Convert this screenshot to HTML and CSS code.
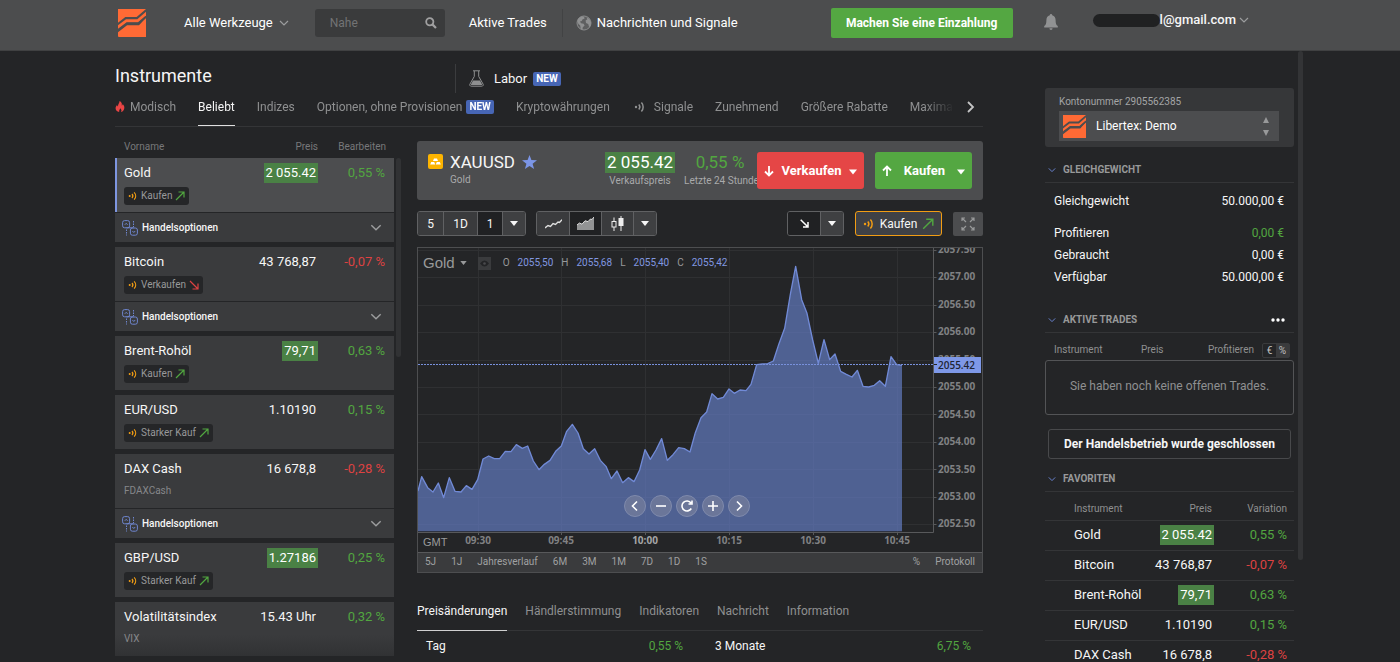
FILE: index.html
```html
<!DOCTYPE html>
<html lang="de">
<head>
<meta charset="utf-8">
<meta name="viewport" content="width=device-width, initial-scale=1">
<title>Libertex: Demo</title>
<link rel="stylesheet" href="styles.css">
</head>
<body>
<svg class="sprite" aria-hidden="true">
  <symbol id="logo" viewBox="0 0 84 84"><path fill="#ff6a35" d="M0 0H84L56 24H22L0 41Z"/><path fill="#ff6a35" d="M0 61V49L24 31H58L84 8V20L61 41H26Z"/><path fill="#ff6a35" d="M84 26V84H2L0 82V70L27 49H63Z"/><path d="M2 62L27 43H61L84 23" fill="none" stroke="#4c4d4e" stroke-width="6"/></symbol>
  <symbol id="chev" viewBox="0 0 10 6"><path d="M1 1l4 4 4-4" fill="none" stroke="currentColor" stroke-width="1.2"/></symbol>
  <symbol id="signal" viewBox="0 0 12 12"><circle cx="2" cy="6" r="1.2" fill="currentColor"/><path d="M4.8 3.6a3.6 3.6 0 0 1 0 4.8M7.4 1.6a6.4 6.4 0 0 1 0 8.8" fill="none" stroke="currentColor" stroke-width="1.5"/></symbol>
  <symbol id="up" viewBox="0 0 10 10"><path d="M1 9L9 1M3.5 1H9V6.5" fill="none" stroke="currentColor" stroke-width="1.2"/></symbol>
  <symbol id="down" viewBox="0 0 10 10"><path d="M1 1L9 9M3.5 9H9V3.5" fill="none" stroke="currentColor" stroke-width="1.2"/></symbol>
  <symbol id="tri" viewBox="0 0 8 5"><path d="M0 0h8L4 5z" fill="currentColor"/></symbol>
  <symbol id="opts" viewBox="0 0 16 16"><g fill="none" stroke="#6f86cf"><rect x=".6" y=".6" width="7" height="7.2" rx="2"/><rect x="8.4" y="8" width="7" height="7.2" rx="2"/><path d="M2.8 4.8l1.4-1.5 1.4 1.5M10.4 11l1.4 1.5 1.4-1.5M4.500 7.800h7"/><path d="M11.5 1v6M4.5 9.5v6" stroke-dasharray="1.5 1"/></g></symbol>
</svg>

<header class="topbar">
  <a class="brand" href="#" aria-label="Libertex"><svg width="28" height="28"><use href="#logo"/></svg></a>
  <button class="nav all-tools">Alle Werkzeuge <svg class="grey" width="10" height="6"><use href="#chev"/></svg></button>
  <label class="search">
    <input type="text" placeholder="Nahe" aria-label="Nahe">
    <svg width="12" height="12" viewBox="0 0 12 12"><circle cx="4.8" cy="4.8" r="3.6" fill="none" stroke="#a0a0a1" stroke-width="1.8"/><path d="M7.4 7.4L11 11" stroke="#a0a0a1" stroke-width="2.2"/></svg>
  </label>
  <a class="nav" href="#">Aktive Trades</a>
  <a class="nav news" href="#">
    <svg width="16" height="16" viewBox="0 0 16 16"><circle cx="8" cy="8" r="7" fill="#5e5f60" stroke="#8b8c8d"/><path fill="#8f9091" d="M2 4l3-2.4 3 .2.6 1.6-2.2 1L5.8 6 4 6.6l1 1.6 2.6.6 1 1.8-1.8 1.6L6.4 15l-1.6-.8-.6-3.6L2.4 9 1.4 6.2zM10.4 2.2l3 1.8 1.6 3.6-.4 3.2-1.4 1.4-1-3.2-2.2-1-.4-2.4 1.8-1.4z"/></svg>
    Nachrichten und Signale</a>
  <button class="deposit">Machen Sie eine Einzahlung</button>
  <button class="bell" aria-label="Mitteilungen"><svg width="14" height="17" viewBox="0 0 14 17"><path fill="#919293" d="M7 0c.8 0 1.2.6 1.2 1.3 2.4.6 3.4 2.5 3.4 4.8 0 3.5.6 5 2.2 6v1.3H.2v-1.3c1.6-1 2.2-2.5 2.2-6 0-2.3 1-4.2 3.4-4.800C5.800.6 6.200 0 7 0zM5.400 14.300h3.200a1.600 1.600 0 0 1-3.200 0z"/></svg></button>
  <button class="account"><span class="redacted"></span><span>l@gmail.com</span><svg class="grey" width="10" height="6"><use href="#chev"/></svg></button>
</header>

<div class="page">
<main>
  <div class="title-row">
    <h1>Instrumente</h1>
    <a class="labor" href="#">
      <svg width="15" height="17" viewBox="0 0 15 17"><path d="M4 .8h7M5.300 1v5.400L1 14a1.400 1.400 0 0 0 1.200 2.200h10.600A1.400 1.400 0 0 0 14 14L9.700 6.400V1" fill="none" stroke="#8e8f90"/><path d="M4 10.500h7l2 3.700c.2.600 0 .9-.5.9h-10c-.500 0-.7-.3-.5-.9z" fill="#8e8f90"/></svg>
      Labor <span class="new">NEW</span></a>
  </div>
  <nav class="tabs">
    <div class="tabs-clip">
    <a class="hot" href="#"><svg width="10" height="11" viewBox="0 0 10 11"><path fill="#e94545" d="M4.600 0C7.200 1.400 7 3.400 6.700 4.600c.7-.2 1-.9 1-1.600C9.200 4.600 9.600 6 9.200 7.800 8.800 9.600 7.400 10.900 6 11c.8-1.200.6-2.600-.8-3.800-.2 1.200-1.400 2-1 3.800C2 10.800.7 9.400.6 7.600.5 6 1.400 5 2 4c.2.700.4 1 .9 1.400C2.900 3.200 4.400 2.400 4.600 0z"/></svg>Modisch</a>
    <a class="active" href="#">Beliebt</a>
    <a href="#">Indizes</a>
    <a href="#">Optionen, ohne Provisionen <span class="new">NEW</span></a>
    <a href="#">Kryptowährungen</a>
    <a class="sig" href="#"><svg width="12" height="12"><use href="#signal"/></svg>Signale</a>
    <a href="#">Zunehmend</a>
    <a href="#">Größere Rabatte</a>
    <a href="#">Maximale</a>
    </div>
    <button aria-label="Weiter"><svg width="8" height="12" viewBox="0 0 8 12"><path d="M1 1l5 5-5 5" fill="none" stroke="#c4c4c5" stroke-width="1.800"/></svg></button>
  </nav>

  <div class="columns">
    <section class="list">
      <div class="list-head"><span>Vorname</span><span>Preis</span><span>Bearbeiten</span></div>
      <div class="list-wrap">
      <div class="items">
        <article class="item selected"><div class="quote"><b>Gold</b><span><mark>2 055.42</mark></span><i class="pos">0,55 %</i></div><span class="tag"><svg width="10" height="10"><use href="#signal"/></svg>Kaufen<svg class="pos" width="10" height="10"><use href="#up"/></svg></span></article>
        <button class="options"><svg width="16" height="16"><use href="#opts"/></svg>Handelsoptionen<svg class="grey" width="12" height="7"><use href="#chev"/></svg></button>
        <article class="item"><div class="quote"><b>Bitcoin</b><span>43 768,87</span><i class="neg">-0,07 %</i></div><span class="tag"><svg width="10" height="10"><use href="#signal"/></svg>Verkaufen<svg class="neg" width="10" height="10"><use href="#down"/></svg></span></article>
        <button class="options"><svg width="16" height="16"><use href="#opts"/></svg>Handelsoptionen<svg class="grey" width="12" height="7"><use href="#chev"/></svg></button>
        <article class="item"><div class="quote"><b>Brent-Rohöl</b><span><mark>79,71</mark></span><i class="pos">0,63 %</i></div><span class="tag"><svg width="10" height="10"><use href="#signal"/></svg>Kaufen<svg class="pos" width="10" height="10"><use href="#up"/></svg></span></article>
        <article class="item"><div class="quote"><b>EUR/USD</b><span>1.10190</span><i class="pos">0,15 %</i></div><span class="tag"><svg width="10" height="10"><use href="#signal"/></svg>Starker Kauf<svg class="pos" width="10" height="10"><use href="#up"/></svg></span></article>
        <article class="item"><div class="quote"><b>DAX Cash</b><span>16 678,8</span><i class="neg">-0,28 %</i></div><span class="code">FDAXCash</span></article>
        <button class="options"><svg width="16" height="16"><use href="#opts"/></svg>Handelsoptionen<svg class="grey" width="12" height="7"><use href="#chev"/></svg></button>
        <article class="item"><div class="quote"><b>GBP/USD</b><span><mark>1.27186</mark></span><i class="pos">0,25 %</i></div><span class="tag"><svg width="10" height="10"><use href="#signal"/></svg>Starker Kauf<svg class="pos" width="10" height="10"><use href="#up"/></svg></span></article>
        <article class="item last"><div class="quote"><b>Volatilitätsindex</b><span>15.43 Uhr</span><i class="pos">0,32 %</i></div><span class="code">VIX</span></article>
      </div>
      <div class="thumb"></div>
      </div>
    </section>

    <section class="detail">
      <div class="hero">
        <svg width="15" height="15" viewBox="0 0 15 15"><rect width="15" height="15" rx="2" fill="#fdb400"/><path fill="#fff" d="M6 4.500h3l1 2.500H5zM3.200 8h3l1 2.500h-5zM8.800 8h3l1 2.500h-5z"/></svg>
        <div class="sym"><h2>XAUUSD</h2><small>Gold</small></div>
        <svg class="star" width="15" height="15" viewBox="0 0 15 15"><path fill="#7b95e6" d="M7.500 0l1.900 5.100 5.600.2-4.400 3.400 1.500 5.300-4.600-3.100L2.900 14l1.500-5.300L0 5.300l5.600-.2z"/></svg>
        <div class="stat price"><mark>2 055.42</mark><small>Verkaufspreis</small></div>
        <div class="stat change"><span class="pos">0,55 %</span><small>Letzte 24 Stunden</small></div>
        <button class="sell"><svg width="10" height="12" viewBox="0 0 10 12"><path d="M5 1v9.500M1 6.500l4 4 4-4" fill="none" stroke="#fff" stroke-width="1.800"/></svg>Verkaufen<svg width="8" height="6"><use href="#tri"/></svg></button>
        <button class="buy"><svg width="10" height="12" viewBox="0 0 10 12"><path d="M5 11V1.500M1 5.500l4-4 4 4" fill="none" stroke="#fff" stroke-width="1.800"/></svg>Kaufen<svg width="8" height="6"><use href="#tri"/></svg></button>
      </div>

      <div class="toolbar">
        <div class="group">
          <button>5</button><button class="wide">1D</button><button class="on">1</button><button class="slim" aria-label="Intervall"><svg width="8" height="5"><use href="#tri"/></svg></button>
        </div>
        <div class="group kinds">
          <button aria-label="Linie"><svg width="17" height="10" viewBox="0 0 17 10"><path d="M0 9l3-2.500 2.500 1L8 4.500l2.500 1L13 3l1.500.500L17 .6" fill="none" stroke="#ddd" stroke-width="1.400"/></svg></button>
          <button class="on" aria-label="Fläche"><svg width="17" height="13" viewBox="0 0 17 13"><path d="M0 13V8l2.500-2 2.500 1.200L8 3.800l3 .8L13.500 2l1.500.5L17 0v13z" fill="#929394"/><path d="M0 8l2.500-2 2.500 1.200L8 3.800l3 .8L13.500 2l1.500.5L17 0" fill="none" stroke="#ddd"/></svg></button>
          <button aria-label="Kerzen"><svg width="13" height="15" viewBox="0 0 13 15"><path d="M3 1.500v4M3 11v4M10 0v15" stroke="#eee"/><rect x="1" y="5.500" width="4" height="5.500" fill="none" stroke="#eee"/><rect x="7.500" y="2" width="5" height="8" fill="#eee"/></svg></button>
          <button class="slim" aria-label="Diagrammtyp"><svg width="8" height="5"><use href="#tri"/></svg></button>
        </div>
        <div class="group draw">
          <button class="on" aria-label="Zeichnen"><svg width="9" height="9" viewBox="0 0 9 9"><path d="M.7.7L8 8M3 8h5V3" fill="none" stroke="#fff" stroke-width="1.500"/></svg></button><button class="slim" aria-label="Werkzeuge"><svg width="8" height="5"><use href="#tri"/></svg></button>
        </div>
        <button class="signal-btn"><svg width="12" height="12"><use href="#signal"/></svg>Kaufen<svg class="pos" width="12" height="12"><use href="#up"/></svg></button>
        <button class="full" aria-label="Vollbild"><svg width="14" height="14" viewBox="0 0 14 14" fill="none" stroke="#98999a" stroke-width="1.200"><path d="M5 5L1 1m0 3V1h3M9 5l4-4m-3 0h3v3M5 9l-4 4m0-3v3h3M9 9l4 4m-3 0h3v-3"/></svg></button>
      </div>

      <div class="chart">
        <svg class="plot" viewBox="0 0 564 304">
          <g class="grid">
            <path d="M0 2.500H516M0 29.500H516M0 57.500H516M0 84.500H516M0 112.500H516M0 139.500H516M0 166.500H516M0 194.500H516M0 221.500H516M0 249.500H516M0 276.500H516"/>
            <path d="M60.500 0V284M143.500 0V284M227.500 0V284M311.500 0V284M395.500 0V284M479.500 0V284"/>
          </g>
          <g transform="scale(.333333)">
            <path class="area" d="M0 729L11 686 29 719 45 732 61 705 77 749 94 689 111 730 129 732 145 713 162 724 179 695 195 633 212 624 229 632 245 632 262 610 279 611 295 590 313 601 329 594 346 639 363 665 379 649 396 637 413 610 430 594 446 550 463 529 480 555 496 602 513 618 530 602 547 637 564 655 580 692 597 669 614 704 631 689 648 701 665 666 681 605 697 634 714 606 731 572 748 637 765 620 782 599 799 602 816 612 832 554 849 509 866 492 882 437 899 453 916 448 933 423 949 436 966 426 984 428 999 409 1016 350 1033 348 1049 347 1066 339 1083 287 1100 241 1117 139 1133 55 1151 155 1167 196 1184 276 1201 346 1218 275 1235 335 1251 318 1268 370 1285 379 1302 387 1318 367 1335 415 1352 417 1369 412 1385 398 1402 415 1419 326 1436 350 1452 352V850H0Z"/>
            <path class="line" d="M0 729L11 686 29 719 45 732 61 705 77 749 94 689 111 730 129 732 145 713 162 724 179 695 195 633 212 624 229 632 245 632 262 610 279 611 295 590 313 601 329 594 346 639 363 665 379 649 396 637 413 610 430 594 446 550 463 529 480 555 496 602 513 618 530 602 547 637 564 655 580 692 597 669 614 704 631 689 648 701 665 666 681 605 697 634 714 606 731 572 748 637 765 620 782 599 799 602 816 612 832 554 849 509 866 492 882 437 899 453 916 448 933 423 949 436 966 426 984 428 999 409 1016 350 1033 348 1049 347 1066 339 1083 287 1100 241 1117 139 1133 55 1151 155 1167 196 1184 276 1201 346 1218 275 1235 335 1251 318 1268 370 1285 379 1302 387 1318 367 1335 415 1352 417 1369 412 1385 398 1402 415 1419 326 1436 350 1452 352"/>
          </g>
          <path class="now" d="M0 116.500H516"/>
          <path class="axis" d="M515.500 0V284.500H0M515.500 2.500h3M515.500 29.500h3M515.500 57.500h3M515.500 84.500h3M515.500 112.500h3M515.500 139.500h3M515.500 166.500h3M515.500 194.500h3M515.500 221.500h3M515.500 249.500h3M515.500 276.500h3M60.500 284v3M143.500 284v3M227.500 284v3M311.500 284v3M395.500 284v3M479.500 284v3"/>
          <g class="ticks">
            <text x="520" y="5">2057.50</text><text x="520" y="32">2057.00</text><text x="520" y="60">2056.50</text><text x="520" y="87">2056.00</text><text x="520" y="115">2055.50</text><text x="520" y="142">2055.00</text><text x="520" y="170">2054.50</text><text x="520" y="197">2054.00</text><text x="520" y="225">2053.50</text><text x="520" y="252">2053.00</text><text x="520" y="279">2052.50</text>
          </g>
          <g class="ticks hours">
            <text x="60" y="296">09:30</text><text x="143" y="296">09:45</text><text class="full-hour" x="227" y="296">10:00</text><text x="311" y="296">10:15</text><text x="395" y="296">10:30</text><text x="479" y="296">10:45</text>
          </g>
          <rect x="516" y="109" width="47" height="16" fill="#7e98e8"/>
          <path d="M516 116.500h3" stroke="#222"/>
          <text class="now-label" x="520" y="121">2055.42</text>
          <text class="gmt" x="5" y="298">GMT</text>
        </svg>
        <div class="legend">
          <button class="inst">Gold <svg width="7" height="4"><use href="#tri"/></svg></button>
          <span class="eye"><svg width="9" height="7" viewBox="0 0 9 7"><path d="M0 3.500Q4.500-2.500 9 3.500 4.500 9.500 0 3.500z" fill="#232426"/><circle cx="4.500" cy="3.500" r="1.300" fill="#4a4b4d"/></svg></span>
          <dl><dt>O</dt><dd>2055,50</dd><dt>H</dt><dd>2055,68</dd><dt>L</dt><dd>2055,40</dd><dt>C</dt><dd>2055,42</dd></dl>
        </div>
        <div class="zoom">
          <button aria-label="Zurück"><svg width="12" height="12" viewBox="0 0 12 12"><path d="M8 1.500L3.500 6 8 10.500"/></svg></button>
          <button aria-label="Verkleinern"><svg width="12" height="12" viewBox="0 0 12 12"><path d="M1 6h10"/></svg></button>
          <button aria-label="Zurücksetzen"><svg width="12" height="12" viewBox="0 0 12 12"><path d="M10.300 8.500A5 5 0 1 1 10 3M11 .5V4H7.500"/></svg></button>
          <button aria-label="Vergrößern"><svg width="12" height="12" viewBox="0 0 12 12"><path d="M1 6h10M6 1v10"/></svg></button>
          <button aria-label="Vor"><svg width="12" height="12" viewBox="0 0 12 12"><path d="M4 1.500L8.500 6 4 10.500"/></svg></button>
        </div>
        <div class="ranges">
          <button>5J</button><button>1J</button><button>Jahresverlauf</button><button>6M</button><button>3M</button><button>1M</button><button>7D</button><button>1D</button><button>1S</button><button class="pct">%</button><button>Protokoll</button>
        </div>
      </div>

      <nav class="subtabs"><a class="active" href="#">Preisänderungen</a><a href="#">Händlerstimmung</a><a href="#">Indikatoren</a><a href="#">Nachricht</a><a href="#">Information</a></nav>
      <dl class="perf"><dt>Tag</dt><dd>0,55 %</dd><dt>3 Monate</dt><dd>6,75 %</dd></dl>
    </section>
  </div>
</main>

<aside>
  <div class="card">
    <label for="acc">Kontonummer 2905562385</label>
    <div class="select">
      <svg width="23" height="23"><use href="#logo"/></svg>
      <select id="acc"><option>Libertex: Demo</option></select>
      <svg class="arrows" width="6" height="19" viewBox="0 0 6 19"><path fill="#98999a" d="M3 0l3 6H0zM0 13h6l-3 6z"/></svg>
    </div>
  </div>

  <h3><svg width="8" height="6"><use href="#chev"/></svg>GLEICHGEWICHT</h3>
  <dl class="balance">
    <dt>Gleichgewicht</dt><dd>50.000,00 €</dd>
    <dt class="apart">Profitieren</dt><dd class="apart pos">0,00 €</dd>
    <dt>Gebraucht</dt><dd>0,00 €</dd>
    <dt>Verfügbar</dt><dd>50.000,00 €</dd>
  </dl>

  <h3><svg width="8" height="6"><use href="#chev"/></svg>AKTIVE TRADES<button aria-label="Mehr"><svg width="14" height="4" viewBox="0 0 14 4" fill="#fff"><circle cx="2" cy="2" r="1.700"/><circle cx="7" cy="2" r="1.700"/><circle cx="12" cy="2" r="1.700"/></svg></button></h3>
  <div class="trade-head"><span>Instrument</span><span>Preis</span><span>Profitieren</span><span class="toggle"><button>€</button><button class="on">%</button></span></div>
  <p class="empty">Sie haben noch keine offenen Trades.</p>
  <button class="closed">Der Handelsbetrieb wurde geschlossen</button>

  <h3><svg width="8" height="6"><use href="#chev"/></svg>FAVORITEN</h3>
  <table>
    <thead><tr><th>Instrument</th><th>Preis</th><th>Variation</th></tr></thead>
    <tbody>
      <tr><td>Gold</td><td><mark>2 055.42</mark></td><td class="pos">0,55 %</td></tr>
      <tr><td>Bitcoin</td><td>43 768,87</td><td class="neg">-0,07 %</td></tr>
      <tr><td>Brent-Rohöl</td><td><mark>79,71</mark></td><td class="pos">0,63 %</td></tr>
      <tr><td>EUR/USD</td><td>1.10190</td><td class="pos">0,15 %</td></tr>
      <tr><td>DAX Cash</td><td>16 678,8</td><td class="neg">-0,28 %</td></tr>
    </tbody>
  </table>
</aside>
<div class="page-thumb"></div>
</div>
</body>
</html>
```

FILE: styles.css
```css
* { box-sizing: border-box; }
body { margin: 0; height: 100vh; display: flex; flex-direction: column; overflow: hidden; background: #242527; color: #f6f6f6; font: 12px/16px Roboto, "Liberation Sans", sans-serif; }
button, input, select { font: inherit; color: inherit; border: 0; background: none; padding: 0; margin: 0; }
a { color: inherit; text-decoration: none; }
svg { flex: none; display: block; }
dl, dd, h1, h2, h3, p { margin: 0; font-weight: 400; }
i { font-style: normal; }
mark { background: #4a8145; color: #fff; padding: 0 2px; white-space: nowrap; }
.sprite { position: absolute; width: 0; height: 0; }
.grey { color: #9c9d9e; }
.pos { color: #52a640; }
.neg { color: #dd4242; }
.new { background: #4766b5; color: #fff; font-size: 10px; line-height: 14px; font-weight: 700; border-radius: 2px; padding: 0 3px; }

.topbar { flex: none; height: 51px; padding: 0 151px 5px 118px; background: #4c4d4e; border-bottom: 1px solid #404142; display: flex; align-items: center; }
.nav { display: flex; align-items: center; gap: 6px; font-size: 13px; color: #fff; white-space: nowrap; }
.all-tools { margin: 0 26px 0 38px; }
.search { width: 130px; height: 28px; margin-right: 24px; padding: 0 8px 0 15px; background: #3a3b3c; border-radius: 3px; display: flex; align-items: center; }
.search input { flex: 1; min-width: 0; outline: 0; }
.search input::placeholder { color: #727374; opacity: 1; }
.news { margin-left: 15px; padding-left: 13px; height: 28px; border-left: 1px solid #424344; gap: 5px; }
.deposit { margin-left: auto; width: 182px; height: 30px; background: #54a742; border-radius: 2px; font-weight: 700; color: #fff; white-space: nowrap; }
.bell { margin: 0 35px 0 31px; }
.account { display: flex; align-items: center; gap: 3px; font-size: 13px; font-weight: 500; padding-bottom: 5px; white-space: nowrap; }
.redacted { width: 67px; height: 13px; margin-right: -3px; border-radius: 7px; background: #202122; }

.page { flex: 1; min-height: 0; display: flex; padding: 0 97px 0 115px; }
main { flex: 1; min-width: 0; display: flex; flex-direction: column; }
.title-row { height: 42px; display: flex; padding-top: 13px; }
h1 { width: 340px; font-size: 18px; line-height: 24px; }
.labor { display: flex; align-items: center; gap: 6px; height: 29px; border-left: 1px solid #3b3c3e; padding-left: 13px; font-size: 13px; }
.labor svg { margin-right: 4px; }
.tabs { flex: none; height: 34px; border-bottom: 1px solid #343537; display: flex; align-items: flex-start; color: #8f9091; }
.tabs-clip { flex: 1; min-width: 0; height: 33px; overflow: hidden; display: flex; gap: 22px; white-space: nowrap; -webkit-mask-image: linear-gradient(90deg, #000 calc(100% - 38px), transparent calc(100% - 8px)); mask-image: linear-gradient(90deg, #000 calc(100% - 38px), transparent calc(100% - 8px)); }
.tabs a { display: flex; align-items: center; gap: 4px; height: 33px; padding-bottom: 5px; border-bottom: 1px solid transparent; }
.tabs a.hot { gap: 5px; }
.tabs a.active { color: #f4f4f4; border-color: #e0e0e0; }
.tabs .sig { gap: 8px; padding-left: 2px; }
.tabs button { width: 16px; height: 28px; margin: 0 4px 0 1px; display: grid; place-items: center; }

.columns { flex: 1; min-height: 0; display: grid; grid-template-columns: 286px minmax(0, 1fr); gap: 16px; }
.list { min-height: 0; display: flex; flex-direction: column; }
.list-head { flex: none; height: 31px; padding: 12px 15px 0 9px; display: grid; grid-template-columns: 1fr auto 68px; font-size: 10px; color: #77787a; }
.list-head span:last-child { text-align: right; }
.list-wrap { flex: 1; min-height: 0; margin-bottom: 6px; display: flex; gap: 2px; overflow: hidden; }
.items { width: 279px; }
.thumb { width: 5px; height: 199px; border-radius: 3px; background: #313234; }
.item { height: 54px; padding: 5px 9px 0 9px; margin-bottom: 5px; background: #3a3b3d; }
.item:has(+ .options) { margin-bottom: 1px; }
.item.selected { background: #4c4d4f; border-left: 2px solid #7e96e0; padding-left: 7px; }
.item.last { background: linear-gradient(#3a3b3d 60%, #313234); }
.quote { display: grid; grid-template-columns: 1fr auto 69px; align-items: center; font-size: 13px; line-height: 20px; }
.quote b { font-weight: 400; }
.quote span { font-weight: 400; }
.quote mark { display: block; margin-right: -2px; }
.quote i { text-align: right; }
.tag { display: inline-flex; align-items: center; gap: 3px; height: 18px; margin-top: 4px; padding: 0 4px; border-radius: 3px; background: #252628; color: #98999a; font-size: 10px; vertical-align: top; }
.tag svg:first-child { color: #f29d14; }
.code { display: block; margin-top: 4px; color: #86878a; font-size: 10px; }
.options { width: 100%; height: 29px; margin-bottom: 5px; padding: 0 12px 0 7px; background: #3a3b3d; display: flex; align-items: center; gap: 4px; font-size: 10px; font-weight: 500; }
.options svg:last-child { margin-left: auto; }

.detail { min-width: 0; padding-top: 14px; }
.hero { height: 59px; padding: 11px 11px 0; background: #4c4d4f; border-radius: 3px; display: flex; align-items: flex-start; }
.hero small { display: block; font-size: 10px; line-height: 16px; color: #a9aaab; white-space: nowrap; }
.hero > svg:first-child { margin-top: 2px; }
.sym { width: 72px; margin-left: 7px; }
h2 { font-size: 17px; line-height: 20px; white-space: nowrap; }
.star { margin: 3px auto 0 0; }
.stat { text-align: center; }
.stat mark, .stat .pos { display: block; font-size: 17px; line-height: 21px; }
.price { width: 70px; }
.change { width: 74px; margin-left: 8px; overflow: hidden; }
.change small { width: 90px; text-align: left; margin-left: 1px; }
.sell, .buy { height: 37px; border-radius: 3px; background: #e54646; color: #fff; font-size: 13px; font-weight: 700; display: flex; align-items: center; justify-content: space-between; padding: 0 7px; }
.sell { width: 107px; }
.buy { width: 97px; margin-left: 11px; background: #54a742; }
.sell svg:last-child, .buy svg:last-child { margin-top: 3px; }

.toolbar { display: flex; align-items: center; margin-top: 11px; height: 25px; }
.group { display: flex; height: 25px; border: 1px solid #606163; border-radius: 3px; overflow: hidden; }
.group button { width: 25px; display: grid; place-items: center; background: #3a3b3d; border-left: 1px solid #606163; }
.group button:first-child { border-left: 0; }
.group .wide { width: 34px; }
.group .on { background: #202123; }
.kinds { margin-left: 10px; }
.kinds button, .draw button { width: 32px; }
.group .slim { width: 23px; background: #3f4042; }
.draw { margin-left: auto; }
.signal-btn { height: 25px; width: 87px; margin: 0 11px; border: 1px solid #f29d14; border-radius: 3px; background: #3f4146; display: flex; align-items: center; justify-content: center; gap: 5px; }
.signal-btn svg:first-child { color: #f29d14; }
.full { width: 30px; height: 24px; background: #4c4d4f; border-radius: 2px; display: grid; place-items: center; }

.chart { position: relative; margin-top: 11px; border: 1px solid #4d4e50; }
.plot { width: 100%; height: auto; }
.grid { fill: none; stroke: #2f3032; }
.area { fill: #627bc0; fill-opacity: .7; }
.line { fill: none; stroke: #718ad6; stroke-width: 4; stroke-linejoin: round; }
.now { stroke: #7890dc; stroke-dasharray: 2 1; }
.axis { fill: none; stroke: #58595b; }
.ticks { font: 700 10px "Open Sans", sans-serif; fill: #808183; }
.hours { text-anchor: middle; }
.full-hour { fill: #a4a5a6; }
.now-label { font: 600 10px "Open Sans", sans-serif; fill: #1f2533; }
.gmt { font: 11px "Liberation Sans", sans-serif; fill: #9a9b9c; }
.legend { position: absolute; left: 5px; top: 5px; display: flex; align-items: center; font-size: 10px; color: #98999a; }
.inst { display: flex; align-items: center; gap: 5px; font: 15px/20px "Liberation Sans", sans-serif; }
.eye { width: 13px; height: 13px; margin: 0 12px 0 11px; background: #3a3b3d; display: grid; place-items: center; }
.legend dl { display: flex; gap: 8px; }
.legend dd { color: #8197e0; }
.zoom { position: absolute; left: 50%; bottom: 55px; margin-left: -76px; display: flex; gap: 4px; }
.zoom button { width: 22px; height: 22px; border-radius: 50%; background: #6b7699; border: 1px solid #7f8aac; display: grid; place-items: center; }
.zoom path { fill: none; stroke: #fff; stroke-width: 1.6; }
.ranges { height: 20px; padding: 0 7px 2px; border-top: 1px solid #58595b; background: #3a3b3d; display: flex; align-items: center; gap: 15px; font-size: 10px; color: #a0a1a2; }
.ranges .pct { margin-left: auto; }

.subtabs { display: flex; gap: 18px; margin-top: 17px; height: 41px; border-bottom: 1px solid #343537; color: #8f9091; }
.subtabs a { height: 41px; padding-top: 13px; border-bottom: 1px solid transparent; }
.subtabs .active { color: #f4f4f4; border-color: #d0d0d0; }
.perf { padding: 7px 0 0; display: grid; grid-template-columns: 1fr 1fr 1fr 1fr; }
.perf dt { padding-left: 9px; }
.perf dd { padding-right: 17px; text-align: right; color: #52a640; }
.perf dt:nth-of-type(2) { padding-left: 15px; }
.perf dd:last-child { padding-right: 12px; }

aside { width: 249px; margin-left: 62px; padding-top: 37px; white-space: nowrap; }
.card { height: 59px; padding: 6px 15px 0 14px; background: #363739; border-radius: 3px; font-size: 10px; color: #a4a5a6; }
.card label { display: block; }
.select { position: relative; height: 30px; margin-top: 1px; display: flex; align-items: center; background: #4c4d4f; padding-left: 4px; }
.select select { position: absolute; inset: 0; width: 100%; padding-left: 37px; appearance: none; color: #fff; font-size: 12px; }
.arrows { position: absolute; right: 10px; }
h3 { display: flex; align-items: center; gap: 7px; height: 26px; margin-top: 10px; padding: 0 9px 0 3px; border-bottom: 1px solid #343537; font-size: 10px; font-weight: 700; color: #98999a; }
h3 svg { color: #6d86d6; }
h3 button { margin-left: auto; }
.balance { display: grid; grid-template-columns: 1fr auto; row-gap: 6px; padding: 10px 10px 0 9px; margin-bottom: 22px; }
.balance dd { text-align: right; }
.apart { margin-top: 10px; }
.trade-head { display: flex; align-items: center; height: 27px; padding: 7px 4px 0 9px; font-size: 10px; color: #8f9091; }
.trade-head span:nth-child(1) { width: 87px; }
.trade-head .toggle { margin-left: 8px; display: flex; border: 1px solid #3a3b3d; border-radius: 2px; color: #c0c0c1; }
.trade-head span:nth-child(3) { margin-left: auto; }
.toggle button { width: 13px; height: 13px; line-height: 13px; }
.toggle .on { background: #3a3b3d; }
.empty { height: 55px; border: 1px solid #535456; border-radius: 3px; display: grid; place-items: center; color: #8f9091; padding-bottom: 3px; }
.closed { display: block; width: 243px; height: 30px; margin: 14px 0 0 3px; border: 1px solid #48494b; border-radius: 3px; font-weight: 700; }
.closed + h3 { margin-top: 7px; }
table { width: 100%; border-collapse: collapse; }
th, td { height: 30px; padding: 0; text-align: right; border-bottom: 1px solid #343537; }
th { height: 28px; padding-top: 6px; font-size: 10px; font-weight: 400; color: #8f9091; }
th:first-child, td:first-child { text-align: left; padding-left: 29px; width: 100px; }
th:last-child, td:last-child { padding-right: 7px; width: 82px; }
td mark { display: inline-block; line-height: 20px; margin-right: -2px; }
td { font-size: 13px; }
.page-thumb { width: 5px; height: 509px; margin-left: 4px; background: #333436; border-radius: 3px; }
```
